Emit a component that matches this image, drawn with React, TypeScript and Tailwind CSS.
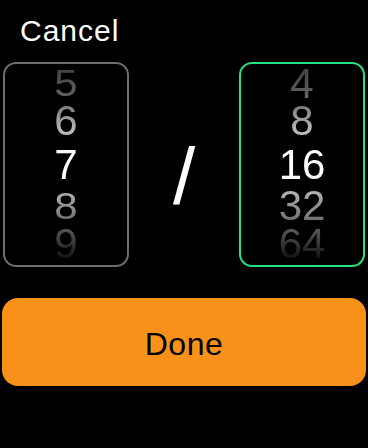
import React from "react";

type Row = { label: string; h: string; text: string };

const LEFT: Row[] = [
  { label: "5", h: "h-[36px]", text: "text-[#cfcfcf] scale-y-[0.87]" },
  { label: "6", h: "h-[37px]", text: "text-[#d4d4d4]" },
  { label: "7", h: "h-[52px]", text: "text-white" },
  { label: "8", h: "h-[30px]", text: "text-[#d4d4d4] scale-y-[0.9]" },
  { label: "9", h: "h-[45px]", text: "text-[#cfcfcf]" },
];

const RIGHT: Row[] = [
  { label: "4", h: "h-[36px]", text: "text-[#cfcfcf]" },
  { label: "8", h: "h-[37px]", text: "text-[#d4d4d4]" },
  { label: "16", h: "h-[52px]", text: "text-white" },
  { label: "32", h: "h-[30px]", text: "text-[#d4d4d4]" },
  { label: "64", h: "h-[45px]", text: "text-[#cfcfcf]" },
];

function Wheel({ rows, active }: { rows: Row[]; active?: boolean }) {
  return (
    <div
      className={
        "w-[126px] h-[205px] rounded-[13px] border-2 overflow-hidden " +
        (active ? "border-[#24e07f]" : "border-[#6d6d6d]")
      }
    >
      {/* fade toward top/bottom like a rotating wheel */}
      <div className="flex flex-col pt-[2px] [mask-image:linear-gradient(to_bottom,rgba(0,0,0,0.3)_0%,rgba(0,0,0,0.45)_15%,rgba(0,0,0,0.85)_32%,black_45%,black_55%,rgba(0,0,0,0.7)_70%,rgba(0,0,0,0.35)_85%,transparent_100%)]">
        {rows.map((r) => (
          <div key={r.label} className={"flex items-center justify-center shrink-0 " + r.h}>
            <span className={"block text-[42px] leading-none " + r.text}>{r.label}</span>
          </div>
        ))}
      </div>
    </div>
  );
}

export default function App() {
  return (
    <div className="w-[368px] h-[448px] bg-black overflow-hidden font-['Liberation_Sans',Arial,sans-serif]">
      <div className="h-[62px] pt-[16px] pl-[20px] text-[30px] leading-none text-white tracking-[1px]">
        Cancel
      </div>

      <div className="flex items-center justify-between px-[3px]">
        <Wheel rows={LEFT} />
        <span className="block pt-[24px] text-[80px] leading-none text-white">/</span>
        <Wheel rows={RIGHT} active />
      </div>

      <button className="mt-[31px] mx-[2px] w-[364px] h-[88px] rounded-[16px] bg-[#f7911a] flex items-center justify-center pt-[3px] text-[32px] leading-none text-black tracking-[0.5px]">
        Done
      </button>
    </div>
  );
}
